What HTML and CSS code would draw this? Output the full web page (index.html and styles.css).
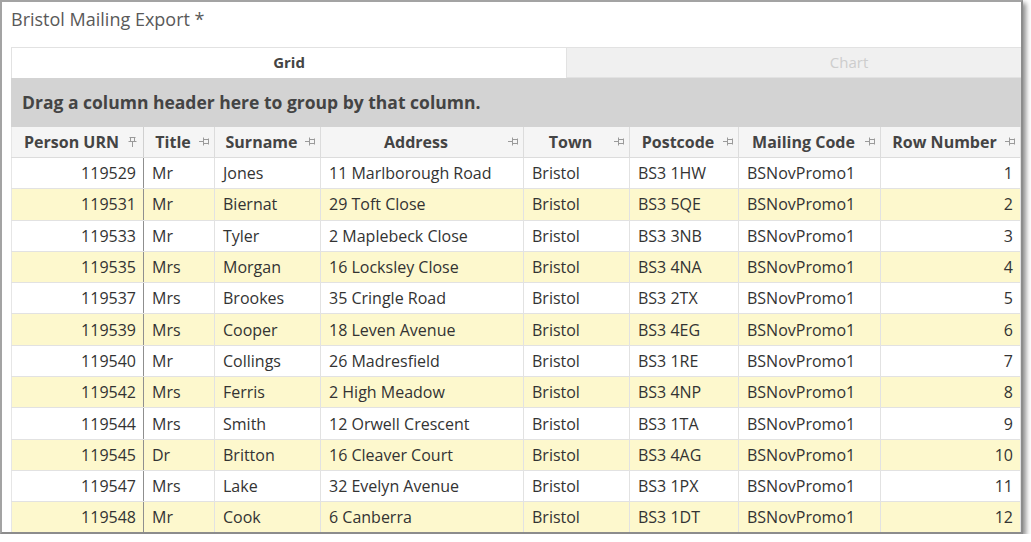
FILE: index.html
```html
<!DOCTYPE html>
<html lang="en">
<head>
    <meta charset="UTF-8">
    <title>Bristol Mailing Export</title>
    <link rel="stylesheet" href="styles.css">
</head>
<body>
    <div class="window">
        <div class="window-title">Bristol Mailing Export *</div>

        <div class="tabs">
            <div class="tab active">Grid</div>
            <div class="tab">Chart</div>
        </div>

        <div class="group-panel">Drag a column header here to group by that column.</div>

        <table class="grid">
            <colgroup>
                <col style="width:132px">
                <col style="width:71px">
                <col style="width:106px">
                <col style="width:203px">
                <col style="width:106px">
                <col style="width:109px">
                <col style="width:142px">
                <col style="width:140px">
            </colgroup>
            <thead>
                <tr>
                    <th class="pinned"><span>Person URN</span><svg class="pin pin-down" width="9" height="11" viewBox="0 0 9 11"><path d="M1.5 1.5h6M2.5 1.5v4h4v-4M0.5 5.5h8M4.5 5.5V11" fill="none" stroke="#9a9a9a" stroke-width="1"/></svg></th>
                    <th><span>Title</span><svg class="pin" width="11" height="9" viewBox="0 0 11 9"><path d="M0 4.5h4M4.5 0.5v8M4.5 2.5h5v4h-5M9.5 1.5v6" fill="none" stroke="#9a9a9a" stroke-width="1"/></svg></th>
                    <th><span>Surname</span><svg class="pin" width="11" height="9" viewBox="0 0 11 9"><path d="M0 4.5h4M4.5 0.5v8M4.5 2.5h5v4h-5M9.5 1.5v6" fill="none" stroke="#9a9a9a" stroke-width="1"/></svg></th>
                    <th><span>Address</span><svg class="pin" width="11" height="9" viewBox="0 0 11 9"><path d="M0 4.5h4M4.5 0.5v8M4.5 2.5h5v4h-5M9.5 1.5v6" fill="none" stroke="#9a9a9a" stroke-width="1"/></svg></th>
                    <th><span>Town</span><svg class="pin" width="11" height="9" viewBox="0 0 11 9"><path d="M0 4.5h4M4.5 0.5v8M4.5 2.5h5v4h-5M9.5 1.5v6" fill="none" stroke="#9a9a9a" stroke-width="1"/></svg></th>
                    <th><span>Postcode</span><svg class="pin" width="11" height="9" viewBox="0 0 11 9"><path d="M0 4.5h4M4.5 0.5v8M4.5 2.5h5v4h-5M9.5 1.5v6" fill="none" stroke="#9a9a9a" stroke-width="1"/></svg></th>
                    <th><span>Mailing Code</span><svg class="pin" width="11" height="9" viewBox="0 0 11 9"><path d="M0 4.5h4M4.5 0.5v8M4.5 2.5h5v4h-5M9.5 1.5v6" fill="none" stroke="#9a9a9a" stroke-width="1"/></svg></th>
                    <th><span>Row Number</span><svg class="pin" width="11" height="9" viewBox="0 0 11 9"><path d="M0 4.5h4M4.5 0.5v8M4.5 2.5h5v4h-5M9.5 1.5v6" fill="none" stroke="#9a9a9a" stroke-width="1"/></svg></th>
                </tr>
            </thead>
            <tbody>
                <tr><td class="num pinned">119529</td><td>Mr</td><td>Jones</td><td>11 Marlborough Road</td><td>Bristol</td><td>BS3 1HW</td><td>BSNovPromo1</td><td class="num">1</td></tr>
                <tr><td class="num pinned">119531</td><td>Mr</td><td>Biernat</td><td>29 Toft Close</td><td>Bristol</td><td>BS3 5QE</td><td>BSNovPromo1</td><td class="num">2</td></tr>
                <tr><td class="num pinned">119533</td><td>Mr</td><td>Tyler</td><td>2 Maplebeck Close</td><td>Bristol</td><td>BS3 3NB</td><td>BSNovPromo1</td><td class="num">3</td></tr>
                <tr><td class="num pinned">119535</td><td>Mrs</td><td>Morgan</td><td>16 Locksley Close</td><td>Bristol</td><td>BS3 4NA</td><td>BSNovPromo1</td><td class="num">4</td></tr>
                <tr><td class="num pinned">119537</td><td>Mrs</td><td>Brookes</td><td>35 Cringle Road</td><td>Bristol</td><td>BS3 2TX</td><td>BSNovPromo1</td><td class="num">5</td></tr>
                <tr><td class="num pinned">119539</td><td>Mrs</td><td>Cooper</td><td>18 Leven Avenue</td><td>Bristol</td><td>BS3 4EG</td><td>BSNovPromo1</td><td class="num">6</td></tr>
                <tr><td class="num pinned">119540</td><td>Mr</td><td>Collings</td><td>26 Madresfield</td><td>Bristol</td><td>BS3 1RE</td><td>BSNovPromo1</td><td class="num">7</td></tr>
                <tr><td class="num pinned">119542</td><td>Mrs</td><td>Ferris</td><td>2 High Meadow</td><td>Bristol</td><td>BS3 4NP</td><td>BSNovPromo1</td><td class="num">8</td></tr>
                <tr><td class="num pinned">119544</td><td>Mrs</td><td>Smith</td><td>12 Orwell Crescent</td><td>Bristol</td><td>BS3 1TA</td><td>BSNovPromo1</td><td class="num">9</td></tr>
                <tr><td class="num pinned">119545</td><td>Dr</td><td>Britton</td><td>16 Cleaver Court</td><td>Bristol</td><td>BS3 4AG</td><td>BSNovPromo1</td><td class="num">10</td></tr>
                <tr><td class="num pinned">119547</td><td>Mrs</td><td>Lake</td><td>32 Evelyn Avenue</td><td>Bristol</td><td>BS3 1PX</td><td>BSNovPromo1</td><td class="num">11</td></tr>
                <tr><td class="num pinned">119548</td><td>Mr</td><td>Cook</td><td>6 Canberra</td><td>Bristol</td><td>BS3 1DT</td><td>BSNovPromo1</td><td class="num">12</td></tr>
            </tbody>
        </table>
    </div>
</body>
</html>
```

FILE: styles.css
```css
:root {
    --line: #e2e2e2;
    --alt-row: #fdf8cd;
    --text: #333;
}

body {
    margin: 0;
    background: #fff;
    font-family: 'Open Sans', 'Noto Sans', sans-serif;
    color: var(--text);
}

.window {
    box-sizing: border-box;
    width: 1023px;
    height: 534px;
    border: 2px solid #a3a3a3;
    border-right-color: #8c8c8c;
    border-bottom-color: #8c8c8c;
    box-shadow: 3px 3px 5px rgba(0,0,0,0.45);
    padding-left: 9px;
    overflow: hidden;
    background: #fff;
}

.window-title {
    font-size: 18px;
    color: #595959;
    height: 45px;
    line-height: 34px;
}

/* tab strip is wider than the window, so the second tab is clipped */
.tabs {
    display: flex;
    width: 1120px;
    height: 30px;
    border-top: 1px solid var(--line);
    border-left: 1px solid var(--line);
}

.tab {
    flex: 0 0 564px;
    text-align: center;
    font-size: 15px;
    line-height: 29px;
    color: #cdcdcd;
    background: #f0f0f0;
    border-left: 1px solid var(--line);
    border-bottom: 1px solid var(--line);
}

.tab.active {
    flex-basis: 554px;
    background: #fff;
    color: #444;
    font-weight: bold;
    border-left: none;
    border-bottom-color: #fff;
}

.group-panel {
    background: #d3d3d3;
    height: 49px;
    line-height: 48px;
    padding-left: 11px;
    font-size: 17.5px;
    font-weight: bold;
    color: #444;
    white-space: nowrap;
}

.grid {
    border-collapse: collapse;
    table-layout: fixed;
    width: 1009px;
    font-size: 16px;
}

.grid th {
    position: relative;
    height: 30px;
    padding: 0 18px 0 6px;
    line-height: 20px;
    background: #f5f5f5;
    border: 1px solid #dcdcdc;
    border-top: none;
    font-weight: bold;
    color: #444;
    text-align: center;
    white-space: nowrap;
}

.grid th:first-child,
.grid td:first-child {
    border-left: 1px solid #e6e6e6;
}

.pin {
    position: absolute;
    right: 4px;
    top: 10px;
}

.pin-down {
    right: 6px;
    top: 9px;
}

.grid td {
    height: 30.3px;
    padding: 0 8px;
    line-height: 20px;
    border: 1px solid var(--line);
    white-space: nowrap;
    overflow: hidden;
}

.grid tbody tr:nth-child(even) td {
    background: var(--alt-row);
}

.grid td.num {
    text-align: right;
    padding-right: 7px;
}

.grid .pinned {
    border-right: 1px solid #8f8f8f;
}

.grid th.pinned {
    border-right-color: #d0d0d0;
}
```
